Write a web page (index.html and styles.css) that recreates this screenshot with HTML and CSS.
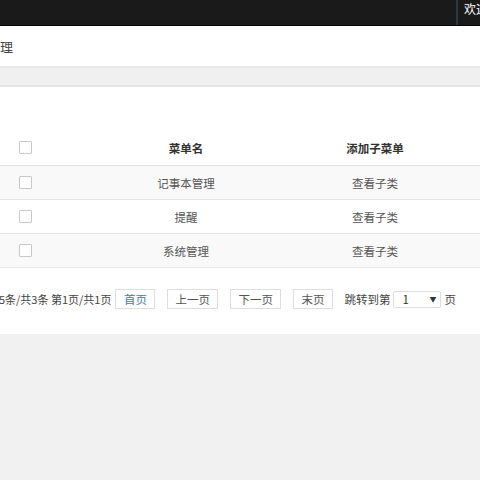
FILE: index.html
```html
<!DOCTYPE html>
<html>
<head>
<meta charset="utf-8">
<link rel="stylesheet" href="styles.css">
</head>
<body>
<div class="topbar">
  <div class="welcome">欢迎您，admin</div>
</div>
<div class="crumb"><span class="crumb-text">菜单管理</span></div>
<div class="strip"></div>
<div class="content">
  <div class="table">
    <div class="row head">
      <div class="cell chk"><span class="box"></span></div>
      <div class="cell">菜单名</div>
      <div class="cell">添加子菜单</div>
      <div class="cell"></div>
    </div>
    <div class="row odd">
      <div class="cell chk"><span class="box"></span></div>
      <div class="cell">记事本管理</div>
      <div class="cell">查看子类</div>
      <div class="cell"></div>
    </div>
    <div class="row">
      <div class="cell chk"><span class="box"></span></div>
      <div class="cell">提醒</div>
      <div class="cell">查看子类</div>
      <div class="cell"></div>
    </div>
    <div class="row odd">
      <div class="cell chk"><span class="box"></span></div>
      <div class="cell">系统管理</div>
      <div class="cell">查看子类</div>
      <div class="cell"></div>
    </div>
  </div>
  <div class="pager">
    <span class="info">显示1-5条/共3条 第1页/共1页</span>
    <span class="btn first">首页</span>
    <span class="btn">上一页</span>
    <span class="btn">下一页</span>
    <span class="btn">末页</span>
    <span class="jump">跳转到第</span>
    <span class="select"><span>1</span><span class="arrow">▼</span></span>
    <span class="page">页</span>
  </div>
</div>
<div class="footer"></div>
</body>
</html>
```

FILE: styles.css
```css
html, body {
  margin: 0;
  padding: 0;
  background: #f1f1f1;
  font-family: "Noto Sans CJK SC", "Liberation Sans", sans-serif;
  font-size: 12px;
  color: #333;
  overflow: hidden;
}

.topbar {
  height: 25px;
  background: #1a1a1a;
  border-bottom: 1px solid #050505;
  display: flex;
  justify-content: flex-end;
  overflow: hidden;
}

.welcome {
  width: 16px;
  border-left: 2px solid #2c3640;
  padding-left: 6px;
  color: #fff;
  font-size: 12px;
  line-height: 18px;
  white-space: nowrap;
  overflow: hidden;
}

.crumb {
  height: 40px;
  background: #fff;
  display: flex;
  align-items: center;
  overflow: hidden;
}

.crumb-text {
  margin-left: -39px;
  font-size: 13px;
  color: #444;
  white-space: nowrap;
}

.strip {
  height: 17px;
  background: #f0f0f0;
  border-top: 2px solid #e9e9e9;
  border-bottom: 2px solid #e2e5e9;
}

.content {
  background: #fff;
  padding-top: 43px;
  height: 204px;
}

.row {
  display: grid;
  grid-template-columns: 50px 272px 106px 1fr;
  height: 33px;
  border-bottom: 1px solid #e5e5e5;
  color: #555;
  font-size: 11.5px;
}

.row.head {
  height: 35px;
  font-weight: bold;
  color: #333;
}

.row.odd {
  background: #f9f9f9;
}

.cell {
  display: flex;
  align-items: center;
  justify-content: center;
}

.box {
  width: 11px;
  height: 11px;
  border: 1px solid #c8c8c8;
  background: #fff;
  border-radius: 1px;
}

.pager {
  display: flex;
  align-items: center;
  height: 20px;
  margin-top: 21px;
  margin-left: -33px;
  white-space: nowrap;
  color: #444;
  font-size: 11.5px;
}

.info {
  font-size: 11px;
  margin-right: 4px;
}

.btn {
  height: 18px;
  line-height: 18px;
  border: 1px solid #ddd;
  padding: 0 7.5px;
  margin-right: 11.5px;
  color: #555;
  background: #fff;
}

.btn.first {
  color: #3b7ea8;
}

.jump {
  margin-right: 3px;
}

.select {
  width: 34px;
  height: 15px;
  border: 1px solid #ddd;
  border-radius: 2px;
  display: flex;
  align-items: center;
  justify-content: space-between;
  padding: 0 4px 0 8px;
  margin-right: 3px;
  color: #333;
}

.arrow {
  font-size: 7px;
  color: #333;
}

.footer {
  height: 146px;
}
```
